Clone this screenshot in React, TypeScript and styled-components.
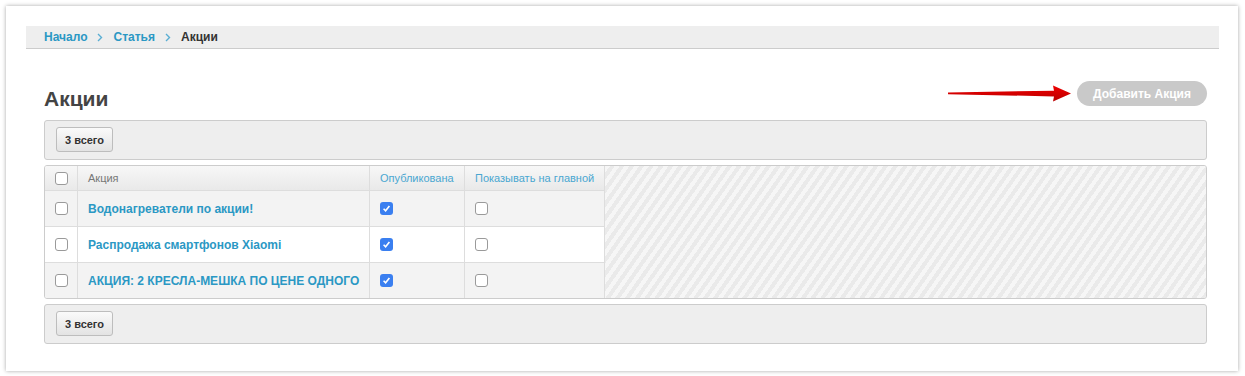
import styled, { createGlobalStyle } from "styled-components";

const GlobalStyle = createGlobalStyle`
  html, body {
    margin: 0;
    padding: 0;
    background: #ffffff;
  }
  body {
    font-family: "Liberation Sans", Arial, sans-serif;
    color: #333;
  }
`;

interface IPromo {
  title: string;
  published: boolean;
  onMain: boolean;
}

const promos: IPromo[] = [
  { title: "Водонагреватели по акции!", published: true, onMain: false },
  { title: "Распродажа смартфонов Xiaomi", published: true, onMain: false },
  { title: "АКЦИЯ: 2 КРЕСЛА-МЕШКА ПО ЦЕНЕ ОДНОГО", published: true, onMain: false },
];

const Chevron = () => (
  <svg width="6" height="9" viewBox="0 0 6 9">
    <polyline points="1,1 4.5,4.5 1,8" fill="none" stroke="#5aaed3" strokeWidth="1.4" />
  </svg>
);

const Arrow = () => (
  <svg width="124" height="20" viewBox="0 0 124 20">
    <defs>
      <linearGradient id="shaft" x1="0" y1="0" x2="0" y2="1">
        <stop offset="0" stopColor="#f00000" />
        <stop offset="1" stopColor="#b80000" />
      </linearGradient>
    </defs>
    <polygon
      points="0,8.4 106,6.8 105,1.5 123,9.5 105,17.5 106,12.4 0,10.2"
      fill="url(#shaft)"
    />
  </svg>
);

const CheckBox = ({ checked }: { checked?: boolean }) => (
  <Box $checked={checked}>
    {checked && (
      <svg width="9" height="9" viewBox="0 0 9 9">
        <polyline points="1.6,4.8 3.6,6.8 7.4,2" fill="none" stroke="#fff" strokeWidth="1.6" />
      </svg>
    )}
  </Box>
);

const App = () => {
  return (
    <Page>
      <GlobalStyle />
      <Panel>
        <Breadcrumbs>
          <Crumb href="#">Начало</Crumb>
          <Chevron />
          <Crumb href="#">Статья</Crumb>
          <Chevron />
          <CurrentCrumb>Акции</CurrentCrumb>
        </Breadcrumbs>

        <Content>
          <TitleRow>
            <Title>Акции</Title>
            <Actions>
              <Arrow />
              <AddButton>Добавить Акция</AddButton>
            </Actions>
          </TitleRow>

          <Toolbar>
            <CountButton>3 всего</CountButton>
          </Toolbar>

          <TableBox>
            <Grid>
              <HeadCell $center>
                <CheckBox />
              </HeadCell>
              <HeadCell>Акция</HeadCell>
              <HeadCell $link>Опубликована</HeadCell>
              <HeadCell $link>Показывать на главной</HeadCell>
              {promos.map((p, i) => (
                <Row key={p.title} $odd={i % 2 === 0} $last={i === promos.length - 1}>
                  <Cell $center>
                    <CheckBox />
                  </Cell>
                  <Cell>
                    <TitleLink href="#">{p.title}</TitleLink>
                  </Cell>
                  <Cell>
                    <CheckBox checked={p.published} />
                  </Cell>
                  <Cell>
                    <CheckBox checked={p.onMain} />
                  </Cell>
                </Row>
              ))}
            </Grid>
            <Stripes />
          </TableBox>

          <Toolbar>
            <CountButton>3 всего</CountButton>
          </Toolbar>
        </Content>
      </Panel>
    </Page>
  );
};

export default App;

const Page = styled.div`
  padding: 6px 7px 6px 6px;
`;

const Panel = styled.div`
  background: #fff;
  box-shadow: 0 0 4px rgba(0, 0, 0, 0.35);
  padding: 20px 19px 27px 20px;
`;

const Breadcrumbs = styled.nav`
  display: flex;
  align-items: center;
  gap: 10px;
  height: 22px;
  padding-left: 18px;
  background: #eeeeee;
  border-bottom: 1px solid #cccccc;
  font-size: 12px;
  font-weight: bold;
`;

const Crumb = styled.a`
  color: #2b98c4;
  text-decoration: none;
`;

const CurrentCrumb = styled.span`
  color: #333;
`;

const Content = styled.div`
  display: flex;
  flex-direction: column;
  gap: 5px;
  padding: 0 12px 0 18px;
`;

const TitleRow = styled.div`
  display: flex;
  justify-content: space-between;
  align-items: flex-start;
  margin: 32px 0 4px;
`;

const Title = styled.h1`
  margin: 6px 0 0;
  font-size: 21px;
  line-height: 24px;
  font-weight: bold;
  color: #444;
`;

const Actions = styled.div`
  display: flex;
  align-items: center;
  gap: 5px;
`;

const AddButton = styled.button`
  width: 130px;
  height: 25px;
  padding: 0;
  border: none;
  border-radius: 13px;
  background: #c9c9c9;
  color: #fff;
  font-family: "Liberation Sans", Arial, sans-serif;
  font-size: 12px;
  font-weight: bold;
`;

const Toolbar = styled.div`
  height: 40px;
  padding: 6px 11px;
  box-sizing: border-box;
  background: #eeeeee;
  border: 1px solid #cccccc;
  border-radius: 3px;
`;

const CountButton = styled.button`
  height: 25px;
  width: 57px;
  padding: 0;
  border: 1px solid #bdbdbd;
  border-radius: 3px;
  background: linear-gradient(#fafafa, #e3e3e3);
  color: #333;
  font-family: "Liberation Sans", Arial, sans-serif;
  font-size: 11px;
  font-weight: bold;
`;

const TableBox = styled.div`
  display: flex;
  border: 1px solid #cccccc;
  border-radius: 3px;
  overflow: hidden;
`;

const Grid = styled.div`
  display: grid;
  grid-template-columns: 33px 292px 95px 140px;
`;

const HeadCell = styled.div<{ $center?: boolean; $link?: boolean }>`
  display: flex;
  align-items: center;
  justify-content: ${(p) => (p.$center ? "center" : "flex-start")};
  height: 25px;
  box-sizing: border-box;
  padding-left: ${(p) => (p.$center ? "0" : "10px")};
  background: linear-gradient(#f7f7f7, #e9e9e9);
  border-right: 1px solid #dddddd;
  border-bottom: 1px solid #dddddd;
  font-size: 11px;
  color: ${(p) => (p.$link ? "#4aa7d1" : "#777")};
  white-space: nowrap;
`;

const Row = styled.div<{ $odd: boolean; $last: boolean }>`
  display: contents;

  & > div {
    background: ${(p) => (p.$odd ? "#f3f3f3" : "#ffffff")};
    height: ${(p) => (p.$last ? "35px" : "36px")};
    border-bottom: ${(p) => (p.$last ? "none" : "1px solid #dddddd")};
  }
`;

const Cell = styled.div<{ $center?: boolean }>`
  display: flex;
  align-items: center;
  justify-content: ${(p) => (p.$center ? "center" : "flex-start")};
  box-sizing: border-box;
  padding-left: ${(p) => (p.$center ? "0" : "10px")};
  border-right: 1px solid #dddddd;
`;

const TitleLink = styled.a`
  color: #2b98c4;
  font-size: 12px;
  font-weight: bold;
  text-decoration: none;
  white-space: nowrap;
`;

const Box = styled.span<{ $checked?: boolean }>`
  display: inline-flex;
  align-items: center;
  justify-content: center;
  width: 13px;
  height: 13px;
  box-sizing: border-box;
  border-radius: 3px;
  border: ${(p) => (p.$checked ? "none" : "1px solid #9a9a9a")};
  background: ${(p) => (p.$checked ? "#3a7ff0" : "#fff")};
`;

const Stripes = styled.div`
  flex: 1;
  background: repeating-linear-gradient(
    125deg,
    #f6f6f6 0 4px,
    #eaeaea 4px 8px
  );
`;
